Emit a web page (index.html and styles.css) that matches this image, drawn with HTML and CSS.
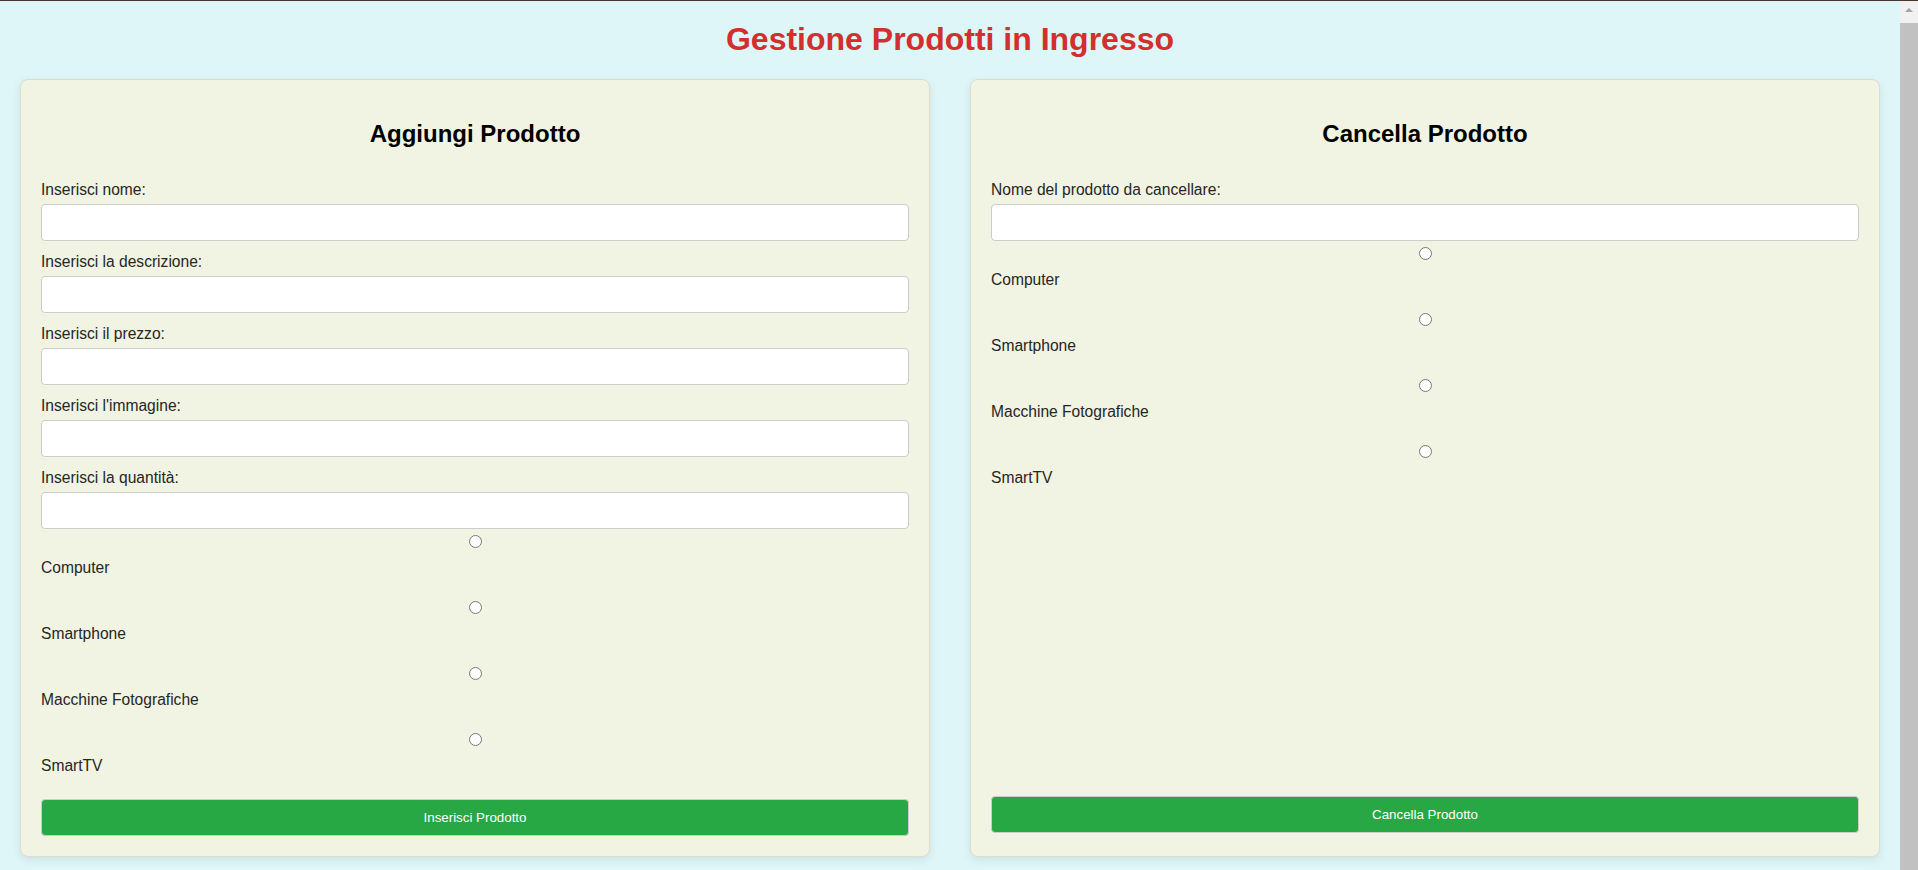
FILE: index.html
```html
<!DOCTYPE html>
<html lang="it">
<head>
<meta charset="utf-8">
<title>Gestione Prodotti in Ingresso</title>
<link rel="stylesheet" href="styles.css">
</head>
<body>
<div class="window">
  <div class="page">
    <h1 class="title">Gestione Prodotti in Ingresso</h1>
    <div class="panels">
      <section class="card">
        <h2 class="card-title">Aggiungi Prodotto</h2>
        <form class="form">
          <div class="fields">
            <div class="field"><label class="field-label">Inserisci nome:</label><input class="text-input" type="text"></div>
            <div class="field"><label class="field-label">Inserisci la descrizione:</label><input class="text-input" type="text"></div>
            <div class="field"><label class="field-label">Inserisci il prezzo:</label><input class="text-input" type="text"></div>
            <div class="field"><label class="field-label">Inserisci l'immagine:</label><input class="text-input" type="text"></div>
            <div class="field"><label class="field-label">Inserisci la quantità:</label><input class="text-input" type="text"></div>
          </div>
          <div class="options">
            <div class="option"><input class="radio" type="radio" name="cat-add"><label class="option-label">Computer</label></div>
            <div class="option"><input class="radio" type="radio" name="cat-add"><label class="option-label">Smartphone</label></div>
            <div class="option"><input class="radio" type="radio" name="cat-add"><label class="option-label">Macchine Fotografiche</label></div>
            <div class="option"><input class="radio" type="radio" name="cat-add"><label class="option-label">SmartTV</label></div>
          </div>
          <button class="btn" type="button">Inserisci Prodotto</button>
        </form>
      </section>
      <section class="card">
        <h2 class="card-title">Cancella Prodotto</h2>
        <form class="form">
          <div class="fields">
            <div class="field"><label class="field-label">Nome del prodotto da cancellare:</label><input class="text-input" type="text"></div>
          </div>
          <div class="options">
            <div class="option"><input class="radio" type="radio" name="cat-del"><label class="option-label">Computer</label></div>
            <div class="option"><input class="radio" type="radio" name="cat-del"><label class="option-label">Smartphone</label></div>
            <div class="option"><input class="radio" type="radio" name="cat-del"><label class="option-label">Macchine Fotografiche</label></div>
            <div class="option"><input class="radio" type="radio" name="cat-del"><label class="option-label">SmartTV</label></div>
          </div>
          <button class="btn btn-bottom" type="button">Cancella Prodotto</button>
        </form>
      </section>
    </div>
  </div>
  <div class="scrollbar">
    <div class="sb-arrow"><span class="sb-triangle"></span></div>
    <div class="sb-thumb"></div>
  </div>
</div>
</body>
</html>
```

FILE: styles.css
```css
html, body {
  margin: 0;
  height: 100%;
  overflow: hidden;
}

body {
  font-family: "Liberation Sans", Arial, sans-serif;
}

.window {
  display: flex;
  height: 870px;
  box-sizing: border-box;
  border-top: 1px solid #4a3535;
}

.page {
  flex: 1;
  min-width: 0;
  background: #dff6f8;
  padding: 20px 20px 0;
}

.title {
  margin: 0 0 22px;
  text-align: center;
  font-size: 32px;
  line-height: 36px;
  font-weight: bold;
  color: #d32f2f;
}

.panels {
  display: flex;
  gap: 40px;
  align-items: stretch;
}

.card {
  flex: 1;
  min-width: 0;
  display: flex;
  flex-direction: column;
  background: #f1f4e2;
  border: 1px solid #dcdcd2;
  border-radius: 8px;
  box-shadow: 0 3px 8px rgba(60, 90, 100, 0.12);
  padding: 20px;
}

.card-title {
  margin: 20px 0 33px;
  text-align: center;
  font-size: 24px;
  line-height: 28px;
  font-weight: bold;
  color: #000;
}

.form {
  flex: 1;
  display: flex;
  flex-direction: column;
}

.fields {
  display: flex;
  flex-direction: column;
  gap: 12px;
}

.field {
  display: flex;
  flex-direction: column;
  gap: 5px;
}

.field-label,
.option-label {
  font-size: 15.6px;
  line-height: 18px;
  color: #262626;
}

.text-input {
  box-sizing: border-box;
  width: 100%;
  height: 37px;
  margin: 0;
  padding: 10px;
  border: 1px solid #cccccc;
  border-radius: 4px;
  background: #ffffff;
  font: 13.33px "Liberation Sans", Arial, sans-serif;
}

.options {
  display: flex;
  flex-direction: column;
  gap: 24px;
  margin-top: 6px;
}

.option {
  display: flex;
  flex-direction: column;
  gap: 11px;
}

.radio {
  width: 13px;
  height: 13px;
  margin: 0 auto;
}

.btn {
  box-sizing: border-box;
  width: 100%;
  height: 37px;
  margin-top: 24px;
  border: 1px solid #cccccc;
  border-radius: 4px;
  background: #28a745;
  color: #ffffff;
  font: 13.33px "Liberation Sans", Arial, sans-serif;
}

.btn-bottom {
  margin-top: auto;
  margin-bottom: 3px;
}

.scrollbar {
  width: 18px;
  flex: none;
  display: flex;
  flex-direction: column;
  background: #f1f1f1;
}

.sb-arrow {
  height: 17px;
  display: flex;
  align-items: center;
  justify-content: center;
}

.sb-triangle {
  width: 0;
  height: 0;
  border-left: 4px solid transparent;
  border-right: 4px solid transparent;
  border-bottom: 4px solid #a3a3a3;
}

.sb-thumb {
  flex: 1;
  margin-top: 5px;
  background: #c1c1c1;
}
```
